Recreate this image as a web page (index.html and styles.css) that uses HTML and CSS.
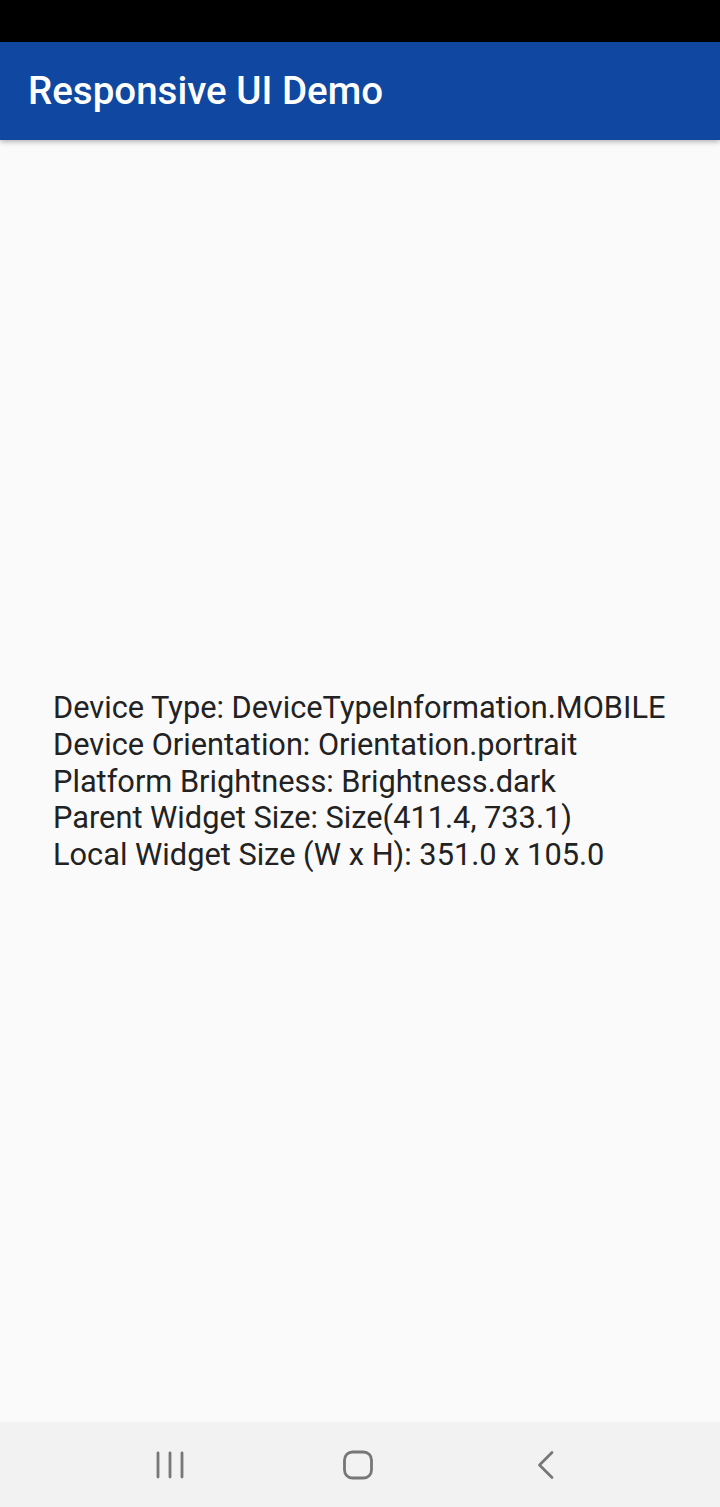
FILE: index.html
```html
<!DOCTYPE html>
<html>
<head>
<meta charset="utf-8">
<link rel="stylesheet" href="styles.css">
</head>
<body>
<div class="screen">
  <div class="status"></div>
  <header class="appbar"><h1 class="title">Responsive UI Demo</h1></header>
  <main class="content">
    <div class="info">
      <div>Device Type: DeviceTypeInformation.MOBILE</div>
      <div>Device Orientation: Orientation.portrait</div>
      <div>Platform Brightness: Brightness.dark</div>
      <div>Parent Widget Size: Size(411.4, 733.1)</div>
      <div>Local Widget Size (W x H): 351.0 x 105.0</div>
    </div>
  </main>
  <nav class="navbar">
    <svg class="nav-icon" width="40" height="40" viewBox="0 0 40 40"><g stroke="#777" stroke-width="2.8" stroke-linecap="round"><line x1="8" y1="8" x2="8" y2="32"/><line x1="20" y1="8" x2="20" y2="32"/><line x1="32" y1="8" x2="32" y2="32"/></g></svg>
    <svg class="nav-icon" width="40" height="40" viewBox="0 0 40 40"><rect x="6.5" y="7" width="27" height="26" rx="8" fill="none" stroke="#777" stroke-width="2.8"/></svg>
    <svg class="nav-icon" width="40" height="40" viewBox="0 0 40 40"><polyline points="27,7.5 14.5,20 27,32.5" fill="none" stroke="#777" stroke-width="2.8" stroke-linecap="round" stroke-linejoin="round"/></svg>
  </nav>
</div>
</body>
</html>
```
FILE: styles.css
```css
html, body { margin: 0; padding: 0; }
body { background: #fafafa; font-family: Roboto, "Liberation Sans", sans-serif; }
.screen { width: 720px; height: 1507px; display: flex; flex-direction: column; }
.status { height: 42px; background: #000; flex: none; }
.appbar {
  height: 98px; flex: none; background: #0f47a1;
  display: flex; align-items: center; padding-left: 28px;
  box-shadow: 0 2px 5px rgba(0,0,0,0.28);
  position: relative; z-index: 1;
}
.title { margin: 0; color: #fff; font-weight: 500; font-size: 38.5px; line-height: 1; }
.content { flex: 1; display: flex; align-items: center; justify-content: center; background: #fafafa; padding-top: 2px; }
.info { width: 614px; color: #222; font-size: 30.75px; line-height: 36.75px; white-space: nowrap; }
.navbar {
  height: 85px; flex: none; background: #f2f2f2;
  display: flex; align-items: center; justify-content: center; gap: 147.5px;
  padding-right: 5px;
}
.nav-icon { display: block; }
```
